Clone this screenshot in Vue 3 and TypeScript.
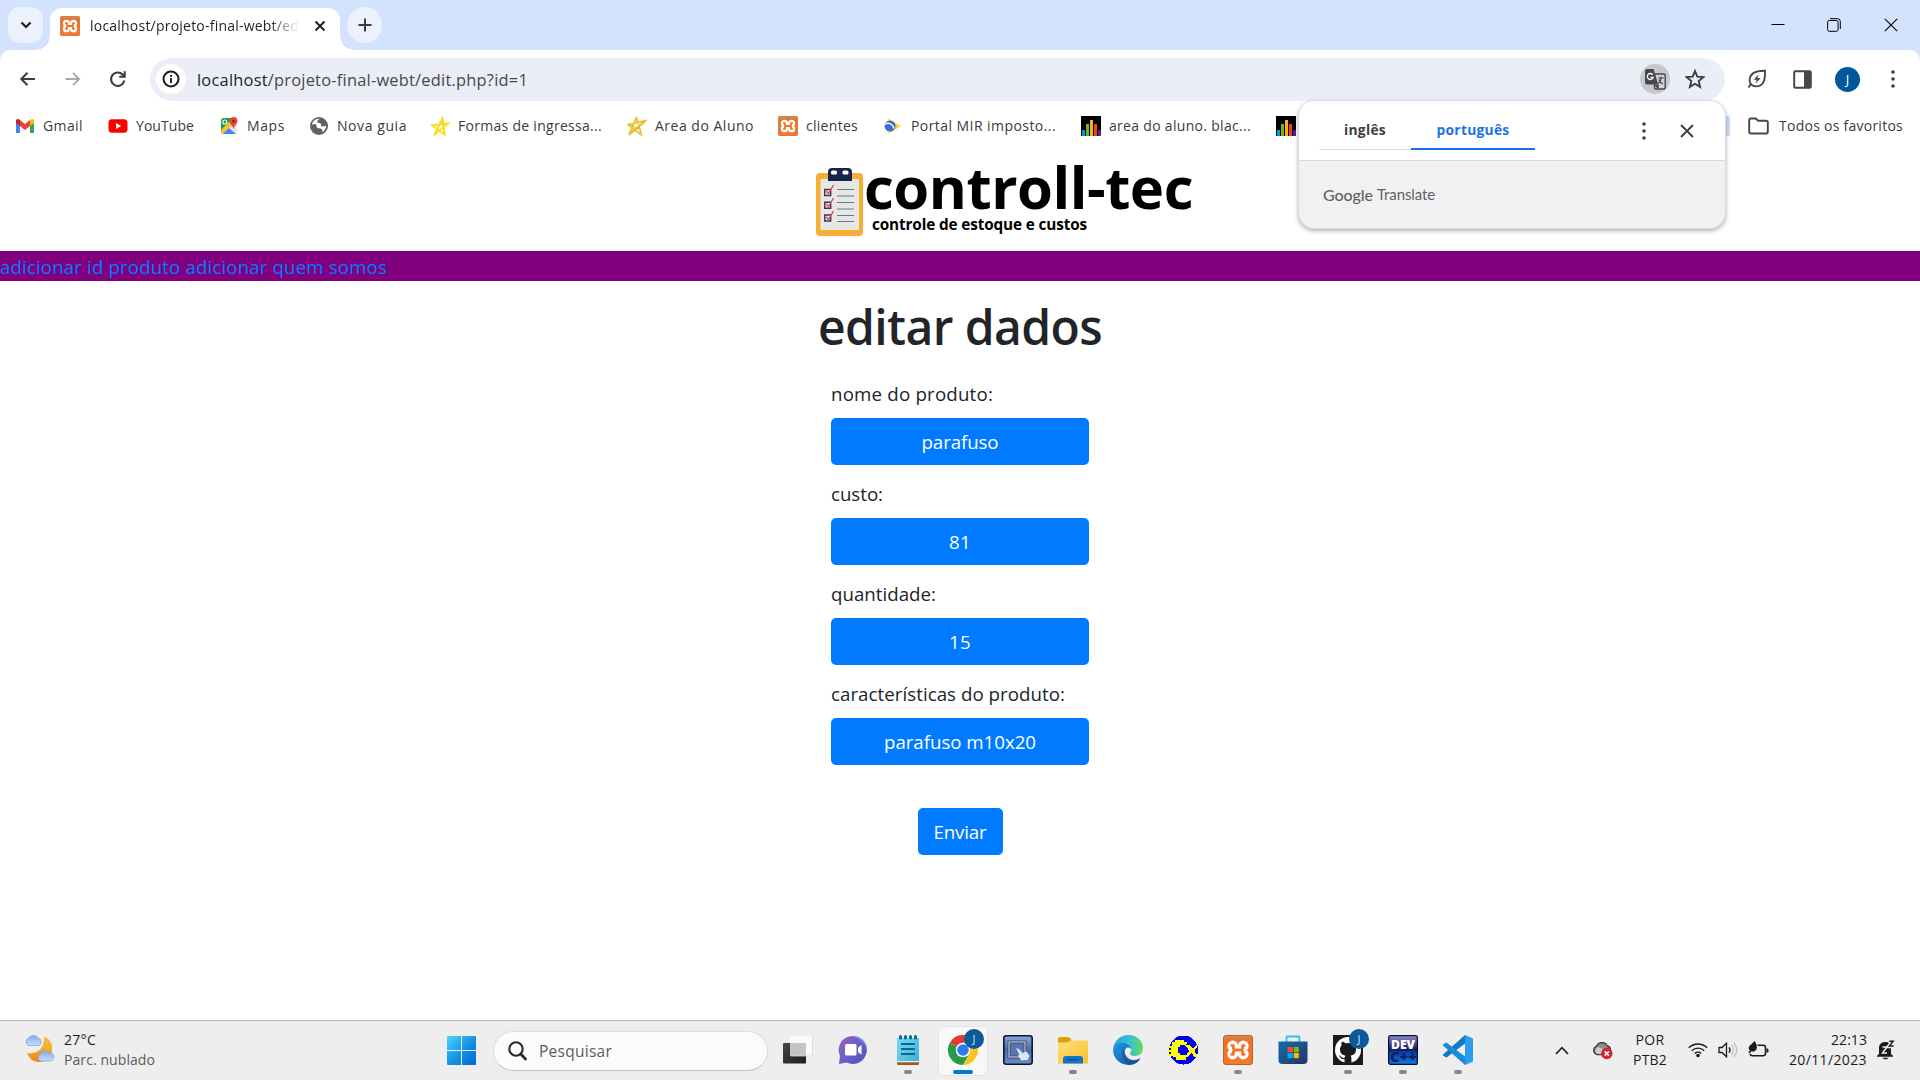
<script setup lang="ts">
import type { Directive } from 'vue'

interface Bookmark { icon: string; label: string; slot: number; text: number }
interface Field { label: string; labelWidth: number; value: string; valueWidth: number }
interface TaskApp { icon: string; running?: boolean; active?: boolean; badge?: boolean }

// Spreads letter spacing so that a label takes exactly the given width.
const vFit: Directive<HTMLElement, number> = {
  mounted(el, { value }) {
    const count = (el.textContent ?? '').length
    const natural = el.getBoundingClientRect().width
    if (count > 0) el.style.letterSpacing = `${(value - natural) / count}px`
  },
}

const bookmarks: Bookmark[] = [
  { icon: 'gmail', label: 'Gmail', slot: 93, text: 40 },
  { icon: 'youtube', label: 'YouTube', slot: 111, text: 58 },
  { icon: 'maps', label: 'Maps', slot: 90, text: 38 },
  { icon: 'globe', label: 'Nova guia', slot: 121, text: 70 },
  { icon: 'star-y', label: 'Formas de ingressa...', slot: 197, text: 144 },
  { icon: 'star-g', label: 'Area do Aluno', slot: 151, text: 99 },
  { icon: 'xampp', label: 'clientes', slot: 105, text: 52 },
  { icon: 'portal', label: 'Portal MIR imposto...', slot: 198, text: 145 },
  { icon: 'bars', label: 'area do aluno. blac...', slot: 195, text: 142 },
  { icon: 'bars', label: '', slot: 20, text: 0 },
]

const fields: Field[] = [
  { label: 'nome do produto:', labelWidth: 162, value: 'parafuso', valueWidth: 77 },
  { label: 'custo:', labelWidth: 52, value: '81', valueWidth: 22 },
  { label: 'quantidade:', labelWidth: 105, value: '15', valueWidth: 22 },
  { label: 'características do produto:', labelWidth: 234, value: 'parafuso m10x20', valueWidth: 152 },
]

const apps: TaskApp[] = [
  { icon: 'taskview' },
  { icon: 'chat' },
  { icon: 'notepad', running: true },
  { icon: 'chrome', active: true, badge: true },
  { icon: 'pointer' },
  { icon: 'folder', running: true },
  { icon: 'edge' },
  { icon: 'cx' },
  { icon: 'xampp', running: true },
  { icon: 'store' },
  { icon: 'github', running: true, badge: true },
  { icon: 'devcpp', running: true },
  { icon: 'vscode', running: true },
]
</script>

<template>
  <div class="screen">
    <svg class="sprite" aria-hidden="true">
      <defs>
        <linearGradient id="g-xampp" x1="0" y1="0" x2="0" y2="1"><stop offset="0" stop-color="#d98c55" /><stop offset=".12" stop-color="#e07a35" /><stop offset=".2" stop-color="#f37021" /><stop offset="1" stop-color="#f7792a" /></linearGradient>
        <linearGradient id="g-chat" x1="0" y1="0" x2="1" y2="1"><stop offset="0" stop-color="#a061ad" /><stop offset=".45" stop-color="#6a62c8" /><stop offset="1" stop-color="#5050c0" /></linearGradient>
        <linearGradient id="g-note" x1="0" y1="0" x2="1" y2="1"><stop offset="0" stop-color="#7bdcf4" /><stop offset="1" stop-color="#3db0d8" /></linearGradient>
        <linearGradient id="g-folder" x1="0" y1="0" x2="1" y2="1"><stop offset="0" stop-color="#ffe07a" /><stop offset="1" stop-color="#fcbf2a" /></linearGradient>
        <linearGradient id="g-edge1" x1="0" y1="0" x2="1" y2="0"><stop offset="0" stop-color="#2aa3e0" /><stop offset=".55" stop-color="#35c1d6" /><stop offset="1" stop-color="#66dc5a" /></linearGradient>
        <linearGradient id="g-edge2" x1="0" y1="0" x2="1" y2="1"><stop offset="0" stop-color="#1b9be0" /><stop offset="1" stop-color="#0f55a5" /></linearGradient>
        <linearGradient id="g-store" x1="0" y1="0" x2="1" y2="1"><stop offset="0" stop-color="#0f6cb8" /><stop offset="1" stop-color="#25355c" /></linearGradient>
        <linearGradient id="g-dev" x1="0" y1="0" x2="0" y2="1"><stop offset="0" stop-color="#8c8ccb" /><stop offset=".5" stop-color="#16165e" /><stop offset=".56" stop-color="#0a3a9c" /><stop offset="1" stop-color="#1478e6" /></linearGradient>
        <linearGradient id="g-ptr" x1="0" y1="0" x2="0" y2="1"><stop offset="0" stop-color="#8ba5d8" /><stop offset=".5" stop-color="#4d6aa8" /><stop offset="1" stop-color="#6d8bc8" /></linearGradient>
        <linearGradient id="g-win" x1="0" y1="0" x2="1" y2="1"><stop offset="0" stop-color="#4fd5ff" /><stop offset=".5" stop-color="#1597e4" /><stop offset="1" stop-color="#0067cf" /></linearGradient>
        <linearGradient id="g-tv" x1="0" y1="0" x2="1" y2="1"><stop offset="0" stop-color="#484848" /><stop offset="1" stop-color="#1c1c1c" /></linearGradient>
        <linearGradient id="g-moon" x1="0" y1="0" x2="0" y2="1"><stop offset="0" stop-color="#f8c04c" /><stop offset=".5" stop-color="#eeb028" /><stop offset="1" stop-color="#ef7d14" /></linearGradient>
        <linearGradient id="g-cloud" x1="0" y1="0" x2="0" y2="1"><stop offset="0" stop-color="#86a9e8" /><stop offset="1" stop-color="#c8dcfb" /></linearGradient>
      </defs>

      <symbol id="i-gmail" viewBox="0 0 20 20">
        <path d="M1 5v12h4V9z" fill="#4285f4" /><path d="M15 9v8h4V5z" fill="#34a853" />
        <path d="M5 4v6l5 4 5-4V4l-5 4z" fill="#ea4335" />
        <path d="M1 5c0-2 2-2.6 4-1v6L1 7z" fill="#c5221f" /><path d="M19 5c0-2-2-2.6-4-1v6l4-3z" fill="#fbbc04" />
      </symbol>
      <symbol id="i-youtube" viewBox="0 0 20 20"><rect x=".5" y="3.3" width="19" height="13.4" rx="3.4" fill="#f00" /><path d="M8 7v6l5.2-3z" fill="#fff" /></symbol>
      <symbol id="i-maps" viewBox="0 0 20 20">
        <rect x="2" y="2" width="16" height="16" rx="1.8" fill="#dfe2e6" /><path d="M3.8 2H15L2 15V4z" fill="#1a9e55" />
        <path d="M2 14L14 2l4 2v1L4 18H3l-1-1z" fill="#fbc02d" /><path d="M4 18l6-6 7 6z" fill="#4285f4" /><path d="M10 12l8-7v12z" fill="#e4e6ea" />
        <circle cx="5.8" cy="6" r="2" fill="none" stroke="#fff" stroke-width="1.1" />
        <path d="M14.5 1a4 4 0 0 1 4 4c0 3-3.200 4.200-4 8-.800-3.800-4-5-4-8a4 4 0 0 1 4-4z" fill="#e8453c" /><circle cx="14.500" cy="5" r="1.500" fill="#8c2019" />
      </symbol>
      <symbol id="i-globe" viewBox="0 0 20 20"><circle cx="10" cy="10" r="9" fill="#5f6368" /><path d="M10.500 2.800c-1 1.500-2.500 1.700-2.200 3.200.3 1.300 2.400.6 3.300 1.500.9 1 .2 2.500 1.500 3 1.100.4 2.300-.7 4.100-.4-.1 2.400-1.500 4.500-3.200 5.800-1-.8-.3-2.300-1.500-3-1.200-.6-3.500.2-4.500-1.300-.8-1.300-.2-3-1.600-3.500-1.200-.4-2.400.2-3.400.6.300-3.200 3.600-6.200 7.500-5.900z" fill="#fff" /></symbol>
      <symbol id="i-star-y" viewBox="0 0 20 20"><path d="M4 19L12.500 1.500l2.500 17.500L1.500 9 19 7z" fill="none" stroke="#fce11c" stroke-width="1.700" stroke-linejoin="round" /><path d="M5 18.500l7-14 2 13.500M2 10l15-2.500" fill="none" stroke="#f6cf10" stroke-width=".7" /></symbol>
      <symbol id="i-star-g" viewBox="0 0 20 20"><path d="M2 18.500L9.500 1.500 14.500 19 1 8.500 19 4.500z" fill="none" stroke="#eec43a" stroke-width="1.900" stroke-linejoin="round" /><path d="M3 18l8-6 7-6.500M3 9l9 4" fill="none" stroke="#cfa436" stroke-width=".8" /></symbol>
      <symbol id="i-xampp" viewBox="0 0 30 30">
        <rect x=".5" y=".5" width="29" height="29" rx="2.500" fill="url(#g-xampp)" stroke="#b9622a" />
        <g fill="#fff"><circle cx="9.700" cy="11" r="5.400" /><circle cx="20.300" cy="11" r="5.400" /><circle cx="9.700" cy="19" r="5.400" /><circle cx="20.300" cy="19" r="5.400" /><path d="M9 11h12v8H9z" /></g>
        <g fill="none" stroke="#f37424" stroke-width="2.800" stroke-linecap="round" stroke-linejoin="round"><path d="M8.800 10.600h1.600v3M8.800 19.400h1.600v-3M21.200 10.600h-1.600v3M21.200 19.400h-1.600v-3M11 15h8" /></g>
      </symbol>
      <symbol id="i-portal" viewBox="0 0 20 20"><path d="M4 2l14 8L5 18l3-8z" fill="#f8da2c" /><circle cx="7" cy="10" r="5.500" fill="#3a6fd0" /><path d="M1.500 8.500c4-2.500 8-1 9.500 4" fill="none" stroke="#fff" stroke-width="1.400" /></symbol>
      <symbol id="i-bars" viewBox="0 0 20 20"><path fill="#000" d="M0 0h20v20H0z" /><path fill="#0098e8" d="M1 14h3v6H1z" /><path fill="#6ab42c" d="M5 8h3v12H5z" /><path fill="#f8b400" d="M9 4h3v16H9z" /><path fill="#f04020" d="M13 8h3v12h-3z" /><path fill="#5c1a90" d="M17 14h3v6h-3z" /></symbol>

      <symbol id="i-taskview" viewBox="0 0 30 30"><rect y="8" width="23" height="20.500" rx="1" fill="url(#g-tv)" /><rect x="7" y="1" width="23" height="20" rx="1" fill="#fafafa" fill-opacity=".95" /><path d="M7 8h16v13H8a1 1 0 0 1-1-1z" fill="#c4c4c4" /><path d="M29.500 2v19H8" fill="none" stroke="#d8d8d8" stroke-width=".8" /></symbol>
      <symbol id="i-chat" viewBox="0 0 30 30"><path d="M15 1a14 14 0 1 1-6.500 26.500L1 29l1-8A14 14 0 0 1 15 1z" fill="url(#g-chat)" /><path d="M15 1a14 14 0 0 1 14 12c-4-6-9-9-14-12z" fill="#7892ee" opacity=".7" /><rect x="7" y="9" width="11.500" height="11.500" rx="1.500" fill="#fff" /><path d="M20 13l3.500-3.200v10L20 17z" fill="#fff" /></symbol>
      <symbol id="i-notepad" viewBox="0 0 30 30"><path d="M4 3h22v23H4z" fill="url(#g-note)" /><path d="M4 26h22v1.200H4z" fill="#eee" /><path d="M4 27.200h22v1.600q0 1.200-1.200 1.200H5.200Q4 30 4 28.800z" fill="#a4581c" /><g stroke="#0b6a8c" stroke-width="1.800"><path d="M8 9h14M8 14h14M8 19h14" /></g><g fill="#0b6a8c"><rect x="6" width="3" height="4.500" rx="1.500" /><rect x="11" width="3" height="4.500" rx="1.500" /><rect x="16" width="3" height="4.500" rx="1.500" /><rect x="21" width="3" height="4.500" rx="1.500" /></g></symbol>
      <symbol id="i-chrome" viewBox="0 0 30 30"><path d="M15 15L2 7.500a15 15 0 0 1 26 0z" fill="#e33b2e" /><path d="M15 15L2 7.500A15 15 0 0 0 15 30l6.500-11.200z" fill="#2a9a48" /><path d="M15 15l6.500 3.800L15 30A15 15 0 0 0 28 7.500H15z" fill="#fcc41f" /><circle cx="15" cy="15" r="7.300" fill="#fff" /><circle cx="15" cy="15" r="5.800" fill="#2a7de8" /></symbol>
      <symbol id="i-pointer" viewBox="0 0 30 30"><rect x=".8" y=".8" width="28.400" height="28.400" rx="2.500" fill="url(#g-ptr)" stroke="#0d1830" stroke-width="1.600" /><rect x="6" y="7" width="16" height="15" fill="#5975b0" stroke="#1c2c50" stroke-width="2.600" /><rect x="6" y="7" width="16" height="15" fill="none" stroke="#cdd9ee" stroke-width="1.200" /><path d="M13 13l3 1 3.500 4 4-1.500 3 4.500-2 4-6 .5-4-5 2-.5z" fill="#dbe6f5" /></symbol>
      <symbol id="i-folder" viewBox="0 0 30 30"><path d="M0 3.500q0-1.500 1.500-1.500H10q1 0 1.800.8L14 5.500V10H0z" fill="#dfa00c" /><path d="M0 7.500h9.500L12 5.500h16.500Q30 5.500 30 7v21.500H0z" fill="url(#g-folder)" /><path d="M5 28.500V24q0-3 3-3h14q3 0 3 3v4.500z" fill="#1375c8" /><path d="M9 24.700h12" stroke="#0a4f94" stroke-width="1.300" /></symbol>
      <symbol id="i-edge" viewBox="0 0 30 30"><path d="M.2 14C1 6 7 0 15.500 0 24 0 30 6 30 13c0 5-3.500 8-8 8-3.500 0-5.500-1.500-5-3 1-1.500 2-3 1-5.500C16.500 8.500 12 7 8 8 4 9 1 11.500.2 14z" fill="url(#g-edge1)" /><path d="M.2 14C2 8 9 6 14 8.500c3 1.500 4.200 4 4 6-1-2-3-2.500-4.500-1.500-5 4-1.500 13 7 12.500 3 0 5-1 6.500-2C25 28 20 30 15.500 30 6 30-.8 22 .2 14z" fill="url(#g-edge2)" /><path d="M11.500 13c-5 6-1 14.500 5 16.900C23 29.500 26 26 27.500 23c-7 4.500-16.500 1.500-16-10z" fill="#184f91" opacity=".75" /></symbol>
      <symbol id="i-cx" viewBox="0 0 30 30" shape-rendering="crispEdges"><circle cx="15.500" cy="15" r="14.500" fill="#0000f4" /><path d="M19 9V7h-3V5H7v2H4v4H3v8h2v3h3v3h10v-3h2v-2h-8v-2h-2v-6h2v-2h6v-1z" fill="#ff0" /><path d="M17 10h5l3 4 3-4h2l-3.500 6 4 6h-4l-3-4-3 3h-3l4-5z" fill="#ff0" /><path d="M0 12h10M0 16h8M0 20h10" stroke="#ff0" stroke-width="1.500" /></symbol>
      <symbol id="i-store" viewBox="0 0 30 30"><path d="M8.500 7V2.200q0-.700.700-.700h11.600q.700 0 .700.700V7" fill="none" stroke="#34bdf0" stroke-width="1.800" /><path d="M.500 6.500h29V25q0 4-4 4h-21q-4 0-4-4z" fill="url(#g-store)" /><path d="M9.500 12H15v5.200H9.500z" fill="#f25022" /><path d="M15.800 12h5v5.200h-5z" fill="#7fba00" /><path d="M9.500 18H15v5.200H9.500z" fill="#00a4ef" /><path d="M15.800 18h5v5.200h-5z" fill="#ffb900" /></symbol>
      <symbol id="i-github" viewBox="0 0 30 30"><path fill="#1c1a1c" d="M0 0h30v30H0z" /><circle cx="15" cy="15" r="13" fill="#fff" /><path d="M11.500 28v-4c-3 .6-4-1-4.800-2.500l-1-1c1.800-.6 2.800 2.200 4.300 2.400.7 0 1.200-.2 1.700-.5.100-.8.500-1.300.9-1.700C8.500 20 7 17.500 7 14.500c0-1.700.6-2.900 1.500-4-.3-1.200-.2-2.500.3-3.800 1.500 0 2.700.7 3.800 1.500a13 13 0 0 1 5 0c1.100-.8 2.200-1.500 3.700-1.500.5 1.300.6 2.600.3 3.800.9 1.100 1.400 2.300 1.400 4 0 3-1.400 5.500-5.500 6.200.6.600.9 1.400.9 2.600V28z" fill="#1c1a1c" /></symbol>
      <symbol id="i-devcpp" viewBox="0 0 30 30"><rect x=".6" y=".6" width="28.800" height="28.800" rx="2" fill="url(#g-dev)" stroke="#06102e" stroke-width="1.200" /><text x="15" y="13.800" text-anchor="middle" font-family="Open Sans, sans-serif" font-weight="800" font-size="12.500" textLength="24" lengthAdjust="spacingAndGlyphs" fill="#fff">DEV</text><text x="15.500" y="26.500" text-anchor="middle" font-family="Open Sans, sans-serif" font-weight="800" font-size="13.500" textLength="27" lengthAdjust="spacingAndGlyphs" fill="#06225e">C++</text></symbol>
      <symbol id="i-vscode" viewBox="0 0 30 30"><path d="M22 0l8 3.500v23L22 30z" fill="#2a9df0" /><path d="M22 0v8.500L3.500 22.500.3 20.800q-.6-.800 0-1.500z" fill="#1279c4" /><path d="M22 30v-8.500L3.500 7.500.3 9.200q-.6.800 0 1.500z" fill="#1d8ad8" /></symbol>
    </svg>

    <header class="browser">
      <div class="tabstrip">
        <div class="tabsearch"><svg width="12" height="8" viewBox="0 0 12 8"><path d="M1.500 1.500L6 6l4.500-4.500" fill="none" stroke="#1f1f1f" stroke-width="2.200" /></svg></div>
        <div class="tab">
          <svg class="ico20"><use href="#i-xampp" /></svg>
          <div class="tabtitle"><span v-fit="218">localhost/projeto-final-webt/edit</span></div>
          <svg class="tabclose" width="12" height="12" viewBox="0 0 12 12"><path d="M1.500 1.500l9 9M10.500 1.500l-9 9" stroke="#1f1f1f" stroke-width="1.900" /></svg>
        </div>
        <div class="newtab"><svg width="14" height="14" viewBox="0 0 14 14"><path d="M7 .500v13M.500 7h13" stroke="#3c3c3c" stroke-width="2" /></svg></div>
        <div class="wincontrols">
          <svg width="14" height="14" viewBox="0 0 14 14"><path d="M.500 6.500h13" stroke="#000" stroke-width="1" /></svg>
          <svg width="14" height="14" viewBox="0 0 14 14" fill="none" stroke="#000"><rect x=".600" y="2.500" width="10.500" height="10.800" rx="1.800" /><path d="M3 .700h7.500a2.800 2.800 0 0 1 2.800 2.800V11" /></svg>
          <svg width="14" height="14" viewBox="0 0 14 14"><path d="M.800.800l12.400 12.400M13.200.800L.800 13.200" stroke="#000" stroke-width="1.100" /></svg>
        </div>
      </div>

      <div class="toolbar">
        <div class="navbtns">
          <svg width="20" height="20" viewBox="0 0 20 20" fill="none" stroke="#3c3c3c" stroke-width="2"><path d="M17 10H4M9.500 3.800L3.300 10l6.200 6.200" /></svg>
          <svg width="20" height="20" viewBox="0 0 20 20" fill="none" stroke="#a9a9a9" stroke-width="1.800"><path d="M2.500 10H16M10 3.800l6.200 6.200-6.200 6.200" /></svg>
          <svg width="20" height="20" viewBox="0 0 20 20" fill="none" stroke="#3c3c3c" stroke-width="2.100"><path d="M16.300 11.500A6.700 6.700 0 1 1 14.500 5.500l2 2" /><path d="M16.700 2.300v5.500h-5.500" /></svg>
        </div>
        <div class="omnibox">
          <div class="siteinfo"><svg width="18" height="18" viewBox="0 0 18 18"><circle cx="9" cy="9" r="7.500" fill="none" stroke="#1f1f1f" stroke-width="2" /><path d="M9 8v5M9 4.900v1.900" stroke="#1f1f1f" stroke-width="1.900" /></svg></div>
          <span v-fit="331" class="url"><b>localhost</b>/projeto-final-webt/edit.php?id=1</span>
          <div class="translatebtn"><svg width="21" height="21" viewBox="0 0 21 21"><rect x="9.500" y="5" width="10.700" height="15" rx="1.500" fill="#d4d4d8" stroke="#474747" stroke-width="1.400" /><path d="M2 0h6.500l4.800 15.500H2a2 2 0 0 1-2-2V2a2 2 0 0 1 2-2z" fill="#474747" /><path d="M9 16l4.500 4.500L14 15.500z" fill="#474747" /><path d="M7.800 5.800A3 3 0 1 0 8.200 8.300H5.500" fill="none" stroke="#fff" stroke-width="1.300" /><path d="M13 9h6M16 7.500V9c0 2.500-1.500 4.500-3 5.500M14 10.500c.5 2 2 3.500 4 4.500" fill="none" stroke="#474747" stroke-width="1.100" /></svg></div>
          <svg class="fav" width="20" height="20" viewBox="0 0 20 20"><path d="M10 2l2.300 5.600 6 .5-4.600 3.900 1.400 5.900L10 14.800l-5.100 3.100L6.300 12 1.700 8.100l6-.5z" fill="none" stroke="#3c3c3c" stroke-width="1.900" /></svg>
        </div>
        <div class="actions">
          <svg width="20" height="20" viewBox="0 0 20 20" fill="none" stroke="#474747" stroke-width="1.900"><path d="M18 1.800C9 1.600 3 4.500 2.600 11c0 4.200 3 6.400 6.800 6.400 7.200 0 9-7 8.600-15.600zM3.800 15L1.500 18.500" /><path d="M11.500 5.500l-5 5.200h3.200l-1.200 4 5.200-5.700h-3.200z" fill="#474747" stroke="none" /></svg>
          <svg width="19" height="19" viewBox="0 0 19 19"><rect x="1.200" y="1.200" width="16.600" height="16.600" rx="1" fill="none" stroke="#474747" stroke-width="2" /><path d="M11 1h7v17h-7z" fill="#474747" /></svg>
          <div class="avatar">J</div>
          <svg width="4" height="20" viewBox="0 0 4 20" fill="#3c3c3c"><circle cx="2" cy="3" r="1.800" /><circle cx="2" cy="10" r="1.800" /><circle cx="2" cy="17" r="1.800" /></svg>
        </div>
      </div>

      <nav class="bookmarks">
        <div v-for="(b, i) in bookmarks" :key="i" class="bookmark" :style="{ width: b.slot + 'px' }">
          <svg class="ico20"><use :href="'#i-' + b.icon" /></svg>
          <span v-fit="b.text">{{ b.label }}</span>
        </div>
        <div class="allfavs">
          <i class="chip"></i>
          <svg width="21" height="18" viewBox="0 0 21 18"><path d="M1.200 3.200q0-1.700 1.700-1.700H8l2 2.200h8.200q1.600 0 1.600 1.600v9.500q0 1.700-1.700 1.700H2.900q-1.700 0-1.700-1.700z" fill="none" stroke="#474747" stroke-width="1.900" /></svg>
          <span v-fit="124">Todos os favoritos</span>
        </div>
      </nav>
    </header>

    <aside class="translate">
      <div class="langs">
        <div class="lang"><span v-fit="42">inglês</span></div>
        <div class="lang current"><span v-fit="73">português</span></div>
        <svg class="more" width="4" height="20" viewBox="0 0 4 20" fill="#3c3c3c"><circle cx="2" cy="3" r="1.800" /><circle cx="2" cy="10" r="1.800" /><circle cx="2" cy="17" r="1.800" /></svg>
        <svg width="14" height="14" viewBox="0 0 14 14"><path d="M1 1l12 12M13 1L1 13" stroke="#3c3c3c" stroke-width="1.800" /></svg>
      </div>
      <div class="brand"><span v-fit="50" class="g">Google</span><span v-fit="58">Translate</span></div>
    </aside>

    <main class="page">
      <div class="logo">
        <svg width="48" height="70" viewBox="0 0 48 70">
          <rect y="5" width="47" height="63" rx="4" fill="#f6ae34" /><rect x="4.500" y="11" width="38.500" height="51" fill="#e7e8e6" />
          <path d="M12 13V4q0-4 4-4h16q4 0 4 4v9z" fill="#16264a" /><rect x="15" y="2.500" width="6" height="4" rx="1.500" fill="#fff" /><rect x="26.500" y="2.500" width="6" height="4" rx="1.500" fill="#fff" />
          <g stroke="#6a7790" stroke-width="1"><path d="M21 21.500h17M21 28h17M21 34.500h17M21 41h17M21 47.500h17M21 53.500h17" /></g>
          <g fill="none" stroke="#333d5c" stroke-width="1.400"><path d="M8.700 21.500h6v6h-6zM8.700 34.300h6v6h-6zM8.700 47h6v6h-6z" /></g>
          <g fill="none" stroke="#e8455a" stroke-width="1.400"><path d="M10 23l2.500 2.500L17.500 17M10 36l2.500 2.500 5-8.500M10 49l2.500 2.500 5-8.500" /></g>
        </svg>
        <div class="logotext"><div class="name"><span v-fit="329">controll-tec</span></div><div class="tagline"><span v-fit="215">controle de estoque e custos</span></div></div>
      </div>
      <nav class="menu"><span v-fit="387">adicionar id produto adicionar quem somos</span></nav>
      <h1><span v-fit="284">editar dados</span></h1>
      <form class="form">
        <div v-for="f in fields" :key="f.label" class="field">
          <label><span v-fit="f.labelWidth">{{ f.label }}</span></label>
          <div class="control"><span v-fit="f.valueWidth">{{ f.value }}</span></div>
        </div>
        <button type="button" class="send"><span v-fit="53">Enviar</span></button>
      </form>
    </main>

    <footer class="taskbar">
      <div class="weather">
        <svg width="31" height="30" viewBox="0 0 31 30">
          <path d="M20 2.500C27 5 29 12 28 17c-1 7-7 11-13 11-6 0-10-4-12-9 9 2 18-4 17-16.500z" fill="url(#g-moon)" />
          <path d="M4.500 11.500a4 4 0 0 1 .300-7.500A5.500 5.500 0 0 1 14 4a4 4 0 0 1 1 7.500z" fill="url(#g-cloud)" stroke="#7d9cd8" stroke-width=".7" /><path d="M16 27a4 4 0 0 1 0-6.800 5 5 0 0 1 8.500-1.400c2.500-.500 5.500 1 5.500 4.200 0 2.500-2 4-4 4z" fill="url(#g-cloud)" stroke="#7d9cd8" stroke-width=".7" />
        </svg>
        <div class="lines"><div class="temp"><span v-fit="32">27°C</span></div><div class="muted"><span v-fit="91">Parc. nublado</span></div></div>
      </div>
      <svg class="start" width="29" height="29" viewBox="0 0 29 29"><path d="M1 0h13v14H0V1q0-1 1-1zM15 0h13q1 0 1 1v13H15zM0 15h14v14H1q-1 0-1-1zM15 15h14v13q0 1-1 1H15z" fill="url(#g-win)" /></svg>
      <div class="search">
        <svg width="19" height="20" viewBox="0 0 19 20" fill="none" stroke="#2a2a2a"><circle cx="8" cy="8" r="6.700" stroke-width="2.100" /><path d="M12.800 13l4.700 5" stroke-width="2.700" stroke-linecap="round" /></svg>
        <span v-fit="73">Pesquisar</span>
      </div>
      <div class="apps">
        <div v-for="a in apps" :key="a.icon" class="app" :class="{ active: a.active }">
          <svg class="ico30"><use :href="'#i-' + a.icon" /></svg>
          <i v-if="a.badge" class="badge">J</i>
          <i v-if="a.running || a.active" class="mark"></i>
        </div>
      </div>
      <div class="tray">
        <svg class="up" width="14" height="9" viewBox="0 0 14 9"><path d="M1 8l6-6.300L13 8" fill="none" stroke="#1b1b1b" stroke-width="1.600" /></svg>
        <svg class="cloud" width="21" height="18" viewBox="0 0 21 18"><path d="M5 12.500a4.300 4.300 0 0 1-.5-8.200A6 6 0 0 1 15.500 4c2 .500 3 2 3 4l-6 4.500z" fill="#8c8c8c" stroke="#3a3a3a" stroke-width="1.300" /><path d="M5.500 12a4 4 0 0 1 0-7c4 .500 6 2.500 8 5v2z" fill="#ccc" /><circle cx="14.800" cy="11.500" r="5.700" fill="#d9202c" /><path d="M12.700 9.400l4.200 4.200M16.900 9.400l-4.200 4.200" stroke="#fff" stroke-width="1.600" /></svg>
        <div class="kbd"><div><span v-fit="29">POR</span></div><div><span v-fit="34">PTB2</span></div></div>
        <svg class="wifi" width="20" height="16" viewBox="0 0 20 16" fill="none" stroke="#1b1b1b" stroke-width="1.400"><path d="M.800 5.800a13 13 0 0 1 18.400 0M3.800 8.700a8.800 8.800 0 0 1 12.400 0M6.800 11.500a4.700 4.700 0 0 1 6.400 0" /><circle cx="10" cy="13.500" r="1.800" fill="#1b1b1b" stroke="none" /></svg>
        <svg class="vol" width="21" height="16" viewBox="0 0 21 16" fill="none" stroke="#1b1b1b" stroke-width="1.300"><path d="M1 5.500h3L8.500 1.200v13.600L4 10.500H1z" /><path d="M11 5.300a4.500 4.500 0 0 1 0 5.400" /><path d="M13.500 3.200a7.500 7.500 0 0 1 0 9.600M16 1a10.500 10.500 0 0 1 0 14" stroke="#bdbdbd" /></svg>
        <svg class="bat" width="21" height="18" viewBox="0 0 21 18"><path d="M9.500 4.300H15q2.500 0 2.500 2.500v5.400q0 2.500-2.500 2.500H4.500Q2.500 14.700 2 13" fill="none" stroke="#1b1b1b" stroke-width="1.500" /><path d="M18.500 7.300q2 0 2 1.500v1.500q0 1.500-2 1.500z" fill="#1b1b1b" /><path d="M6.500 0c3 3.500 3.500 9-.5 10.500-1 .300-2 0-2.500-.300L1.500 12.500.5 12l1.200-2.500C-1.500 5.500 3.500 4 6.500 0z" fill="#1b1b1b" /></svg>
        <div class="clock"><div><span v-fit="36">22:13</span></div><div><span v-fit="78">20/11/2023</span></div></div>
        <svg class="bell" width="18" height="20" viewBox="0 0 18 20"><path d="M2 14V7.500Q2.500 2 8.500 2 14 2 14 7.500V14l2 1.700v1H0v-1zM5.500 17.700h6q-1 1.800-3 1.800t-3-1.800z" fill="#1b1b1b" /><path d="M5.500 7h4.500l-4.500 6H10" fill="none" stroke="#eee" stroke-width="1.500" /><path d="M12 1.200h4l-4 5h4.500" fill="none" stroke="#eee" stroke-width="4" /><path d="M12.300 1.200h4l-4 4.800h4.300" fill="none" stroke="#1b1b1b" stroke-width="1.400" /></svg>
      </div>
    </footer>
  </div>
</template>

<style>
html, body { margin: 0; background: #fff; }
</style>

<style scoped>
.screen { position: relative; width: 1920px; height: 1080px; overflow: hidden; display: flex; flex-direction: column; background: #fff; font-family: 'Open Sans', 'Noto Sans', sans-serif; color: #212529; }
.screen * { box-sizing: border-box; }
.screen span { display: inline-block; white-space: pre; flex: none; }
.sprite { position: absolute; width: 0; height: 0; }
svg { display: block; flex: none; }
.ico20 { width: 20px; height: 20px; }
.ico30 { width: 30px; height: 30px; }

.browser { flex: none; height: 150px; background: #d3e3fd; font-size: 14px; }
.tabstrip { display: flex; height: 50px; padding-left: 8px; align-items: flex-start; }
.tabsearch, .newtab { display: flex; align-items: center; justify-content: center; width: 35px; height: 36px; margin-top: 7px; border-radius: 12px; background: #ebf2fe; }
.newtab { margin-left: 7px; border-radius: 18px; }
.tab { position: relative; display: flex; align-items: center; width: 290px; height: 42px; margin: 8px 0 0 7px; padding: 0 0 7px 10px; border-radius: 12px 12px 0 0; background: #fff; }
.tab::before, .tab::after { content: ''; position: absolute; bottom: 0; width: 14px; height: 14px; }
.tab::before { left: -14px; background: radial-gradient(circle at 0 0, transparent 13.500px, #fff 14px); }
.tab::after { right: -14px; background: radial-gradient(circle at 100% 0, transparent 13.500px, #fff 14px); }
.tabtitle { width: 209px; margin-left: 10px; line-height: 22px; overflow: hidden; color: #1f1f1f; -webkit-mask-image: linear-gradient(90deg, #000 180px, transparent 209px); mask-image: linear-gradient(90deg, #000 180px, transparent 209px); }
.tabclose { margin-left: 15px; }
.wincontrols { display: flex; gap: 43px; margin: 18px 22px 0 auto; }
.wincontrols svg:first-child { margin-right: -1px; }
.toolbar { display: flex; align-items: center; height: 58px; border-radius: 10px 10px 0 0; background: #fff; }
.navbtns { display: flex; gap: 25px; width: 150px; padding-left: 18px; }
.omnibox { display: flex; align-items: center; width: 1575px; height: 43px; padding-left: 6px; border-radius: 22px; background: #ebeef7; }
.siteinfo { display: flex; align-items: center; justify-content: center; width: 30px; height: 30px; border-radius: 50%; background: #fff; }
.url { margin-left: 11px; font-size: 16.400px; color: #474747; }
.url b { font-weight: 400; color: #1f1f1f; }
.translatebtn { display: flex; align-items: center; justify-content: center; width: 30px; height: 30px; margin-left: auto; border-radius: 50%; background: #c7c8cc; }
.fav { margin: 0 20px 0 15px; }
.actions { display: flex; align-items: center; margin-left: 22px; }
.actions svg:nth-child(2) { margin-left: 26px; }
.avatar { width: 25px; height: 25px; margin: 0 31px 0 23px; border-radius: 50%; background: #01579b; color: #fff; font-size: 13px; line-height: 24px; text-align: center; }
.bookmarks { display: flex; align-items: center; height: 42px; padding: 0 17px 7px 15px; background: #fff; color: #3c3c3c; }
.bookmark { display: flex; align-items: center; gap: 8px; flex: none; }
.allfavs { display: flex; align-items: center; gap: 10px; margin-left: auto; }
.chip { width: 12px; height: 20px; margin-right: 8px; border-radius: 2px; background: #c9dcf8; }

.translate { position: absolute; left: 1298px; top: 100px; width: 428px; height: 129px; border: 1px solid #dadce0; border-radius: 16px; overflow: hidden; background: #f1f1f1; box-shadow: 0 2px 4px rgba(0, 0, 0, .3); font-size: 13.800px; }
.langs { display: flex; align-items: center; height: 60px; padding: 0 31px 0 20px; border-bottom: 1px solid #d5d7db; background: #fff; }
.lang { display: flex; justify-content: center; align-self: flex-start; width: 92px; height: 43px; margin-top: 6px; padding-top: 14px; border-bottom: 1px solid #dadce0; font-weight: 700; color: #3c4043; line-height: 18px; }
.lang.current { width: 124px; border-bottom: 2px solid #1a73e8; color: #1a73e8; }
.more { margin: 0 34px 0 auto; }
.brand { display: flex; align-items: center; gap: 4px; height: 66px; padding-left: 24px; font-family: Lato, sans-serif; font-size: 15px; color: #5f6368; }
.brand .g { font-weight: 500; font-size: 16px; }

.page { flex: 1; display: flex; flex-direction: column; }
.logo { display: flex; height: 101px; padding: 18px 0 0 816px; }
.logotext { color: #000; font-weight: 700; }
.name { height: 52px; margin-top: -6px; font-size: 58px; line-height: 50px; }
.tagline { height: 20px; padding-left: 8px; font-size: 15.300px; line-height: 20px; }
.menu { flex: none; height: 30px; background: #800080; color: #007bff; font-size: 18.700px; line-height: 32px; }
h1 { margin: 10px 0 10px; height: 72px; font-size: 48px; font-weight: 600; line-height: 72px; text-align: center; }
.form { display: flex; flex-direction: column; align-items: center; font-size: 18.700px; }
.field { width: 258px; height: 100px; padding-top: 6px; }
.field label { display: block; height: 39px; line-height: 30px; }
.control { height: 47px; border-radius: 5px; background: #007bff; color: #fff; line-height: 47px; text-align: center; }
.send { width: 85px; height: 47px; margin-top: 35px; padding: 0; border: 0; border-radius: 5px; background: #007bff; color: #fff; font: inherit; line-height: 47px; }

.taskbar { display: flex; align-items: center; flex: none; height: 60px; border-top: 1px solid #b9b9b9; background: #eee; font-size: 14px; color: #1b1b1b; }
.weather { display: flex; align-items: center; width: 447px; padding-left: 24px; gap: 9px; }
.weather svg { margin-top: -4px; }
.lines, .kbd, .clock { margin-top: -2px; }
.lines div, .kbd div, .clock div { height: 20px; line-height: 20px; }
.muted, .search span { color: #5c5c5c; }
.search { display: flex; align-items: center; gap: 12px; width: 275px; height: 40px; margin-left: 17px; padding-left: 14px; border: 1px solid #dcdcdc; border-bottom-color: #c4c4c4; border-radius: 20px; background: #fbfbfb; font-size: 15.500px; }
.apps { display: flex; gap: 7px; margin-left: 6px; }
.app { position: relative; display: flex; align-items: center; justify-content: center; width: 48px; height: 48px; padding-bottom: 1px; border-radius: 5px; }
.app.active { background: #f8f8f8; box-shadow: 0 0 0 1px #e4e4e4; }
.badge { position: absolute; left: 25px; top: 2px; width: 20px; height: 20px; border-radius: 50%; background: #0a5a9c; color: #cfe4f5; font-size: 11px; font-style: normal; line-height: 20px; text-align: center; }
.mark { position: absolute; left: 20px; bottom: 1px; width: 8px; height: 4px; border-radius: 2px; background: #868686; }
.active .mark { left: 14px; width: 20px; background: #0078d7; }
.tray { display: flex; align-items: center; margin-left: auto; padding-right: 25px; }
.up { margin-right: 23px; }
.cloud { margin-right: 20px; }
.kbd { width: 34px; text-align: center; }
.wifi { margin-left: 21px; margin-top: -2px; }
.vol { margin-left: 10px; margin-top: -2px; }
.bat { margin-left: 9px; margin-top: -2px; }
.clock { margin-left: 20px; text-align: right; }
.bell { margin-left: 10px; margin-top: -2px; }
</style>
